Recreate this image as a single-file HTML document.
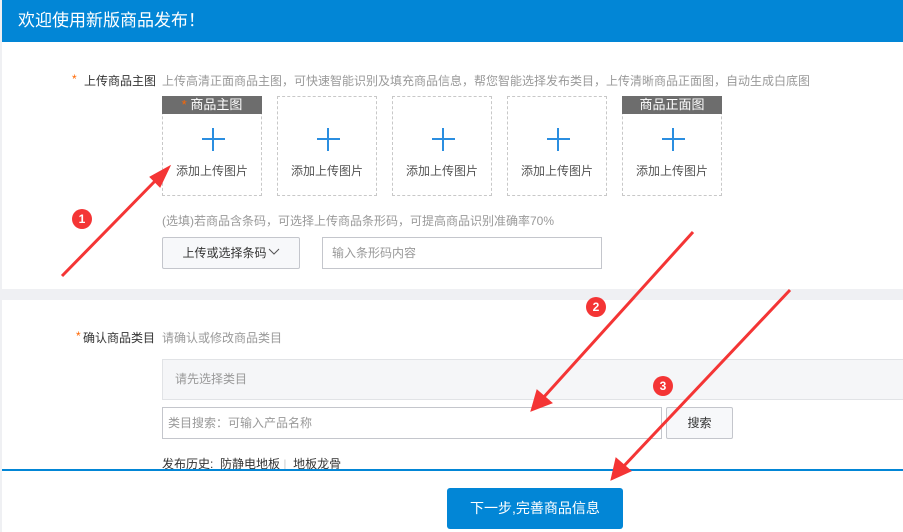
<!DOCTYPE html>
<html><head><meta charset="utf-8"><style>
*{margin:0;padding:0;box-sizing:border-box}
body{width:903px;height:532px;overflow:hidden;background:#eff0f3;font-family:"Liberation Sans","Noto Sans CJK SC",sans-serif;font-size:12px;color:#333;position:relative}
.hdr{position:absolute;left:2px;top:0;width:901px;height:42px;background:#0286d6;color:#fff;font-size:17px;line-height:42px;padding-left:16px}
.p1{position:absolute;left:2px;top:42px;width:901px;height:247px;background:#fff}
.p2{position:absolute;left:2px;top:300px;width:901px;height:232px;background:#fff}
.ab{position:absolute;white-space:nowrap}
.star{color:#f60}
.g{color:#999}
.box{position:absolute;top:96px;width:100px;height:100px;border:1px dashed #c8c8c8}
.box .t{height:18px;background:#6d6d6d;color:#fff;text-align:center;line-height:18px;font-size:13px;margin:-1px -1px 0}
.box .pl{position:absolute;left:39px;top:31px;width:23px;height:23px}
.box .pl:before{content:"";position:absolute;left:0;top:10px;width:23px;height:2px;background:#2b8ee0}
.box .pl:after{content:"";position:absolute;left:10px;top:0;width:2px;height:23px;background:#2b8ee0}
.box .l{position:absolute;left:0;right:0;top:65px;text-align:center;color:#555}
.btn{position:absolute;border:1px solid #c4c6cc;background:#f7f8fa;border-radius:2px;text-align:center}
.inp{position:absolute;border:1px solid #c4c6cc;background:#fff;color:#999;padding-left:9px}
</style></head><body>
<div class="hdr">欢迎使用新版商品发布！</div>
<div class="p1"></div>
<div class="p2"></div>
<div class="ab" style="left:72px;top:72px"><span class="star">*</span></div>
<div class="ab" style="left:84px;top:72px">上传商品主图</div>
<div class="ab g" style="left:162px;top:72px">上传高清正面商品主图，可快速智能识别及填充商品信息，帮您智能选择发布类目，上传清晰商品正面图，自动生成白底图</div>
<div class="box" style="left:162px"><div class="t"><span style="color:#f60">*</span> 商品主图</div><div class="pl"></div><div class="l">添加上传图片</div></div>
<div class="box" style="left:277px"><div class="pl"></div><div class="l">添加上传图片</div></div>
<div class="box" style="left:392px"><div class="pl"></div><div class="l">添加上传图片</div></div>
<div class="box" style="left:507px"><div class="pl"></div><div class="l">添加上传图片</div></div>
<div class="box" style="left:622px"><div class="t">商品正面图</div><div class="pl"></div><div class="l">添加上传图片</div></div>
<div class="ab g" style="left:162px;top:212px">(选填)若商品含条码，可选择上传商品条形码，可提高商品识别准确率70%</div>
<div class="btn" style="left:162px;top:237px;width:138px;height:32px;line-height:30px;color:#333">上传或选择条码<svg width="12" height="8" style="vertical-align:1px;margin-left:1px"><path d="M1 1 L6 6 L11 1" fill="none" stroke="#555" stroke-width="1"/></svg></div>
<div class="inp" style="left:322px;top:237px;width:280px;height:32px;line-height:30px">输入条形码内容</div>
<div class="ab" style="left:76px;top:329px"><span class="star">*</span></div>
<div class="ab" style="left:83px;top:329px">确认商品类目</div>
<div class="ab g" style="left:162px;top:329px">请确认或修改商品类目</div>
<div class="ab" style="left:162px;top:359px;width:741px;height:41px;background:#f5f6f8;border:1px solid #e1e3e6;border-right:none;color:#999;padding-left:12px;line-height:39px">请先选择类目</div>
<div class="inp" style="left:162px;top:407px;width:500px;height:32px;line-height:30px;padding-left:5px">类目搜索：可输入产品名称</div>
<div class="btn" style="left:666px;top:407px;width:67px;height:32px;line-height:30px">搜索</div>
<div class="ab" style="left:162px;top:455px">发布历史: &nbsp;防静电地板 <span style="color:#ccc">|</span> &nbsp;地板龙骨</div>
<div class="ab" style="left:2px;top:469px;width:901px;height:2px;background:#0286d6"></div>
<div class="ab" style="left:447px;top:488px;width:176px;height:41px;background:#0286d6;border-radius:3px;color:#fff;font-size:14px;text-align:center;line-height:41px">下一步,完善商品信息</div>
<svg class="ab" style="left:0;top:0" width="903" height="532">
<g fill="#f43535" stroke="#f43535">
<line x1="62" y1="276" x2="158" y2="178" stroke-width="3"/>
<polygon points="170,166 150,177 160,187" stroke-width="1"/>
<line x1="693" y1="232" x2="543" y2="398" stroke-width="3"/>
<polygon points="531,411 537,390 552,403" stroke-width="1"/>
<line x1="790" y1="290" x2="622" y2="468" stroke-width="3"/>
<polygon points="611,480 616,458 631,471" stroke-width="1"/>
<g stroke="none"><circle cx="82" cy="219" r="10"/><circle cx="596" cy="307" r="10"/><circle cx="663" cy="386" r="10"/></g>
</g>
<g fill="#fff" font-size="12" font-weight="bold" text-anchor="middle" font-family="Liberation Sans"><text x="82" y="223">1</text><text x="596" y="311">2</text><text x="663" y="390">3</text></g>
</svg>
</body></html>
